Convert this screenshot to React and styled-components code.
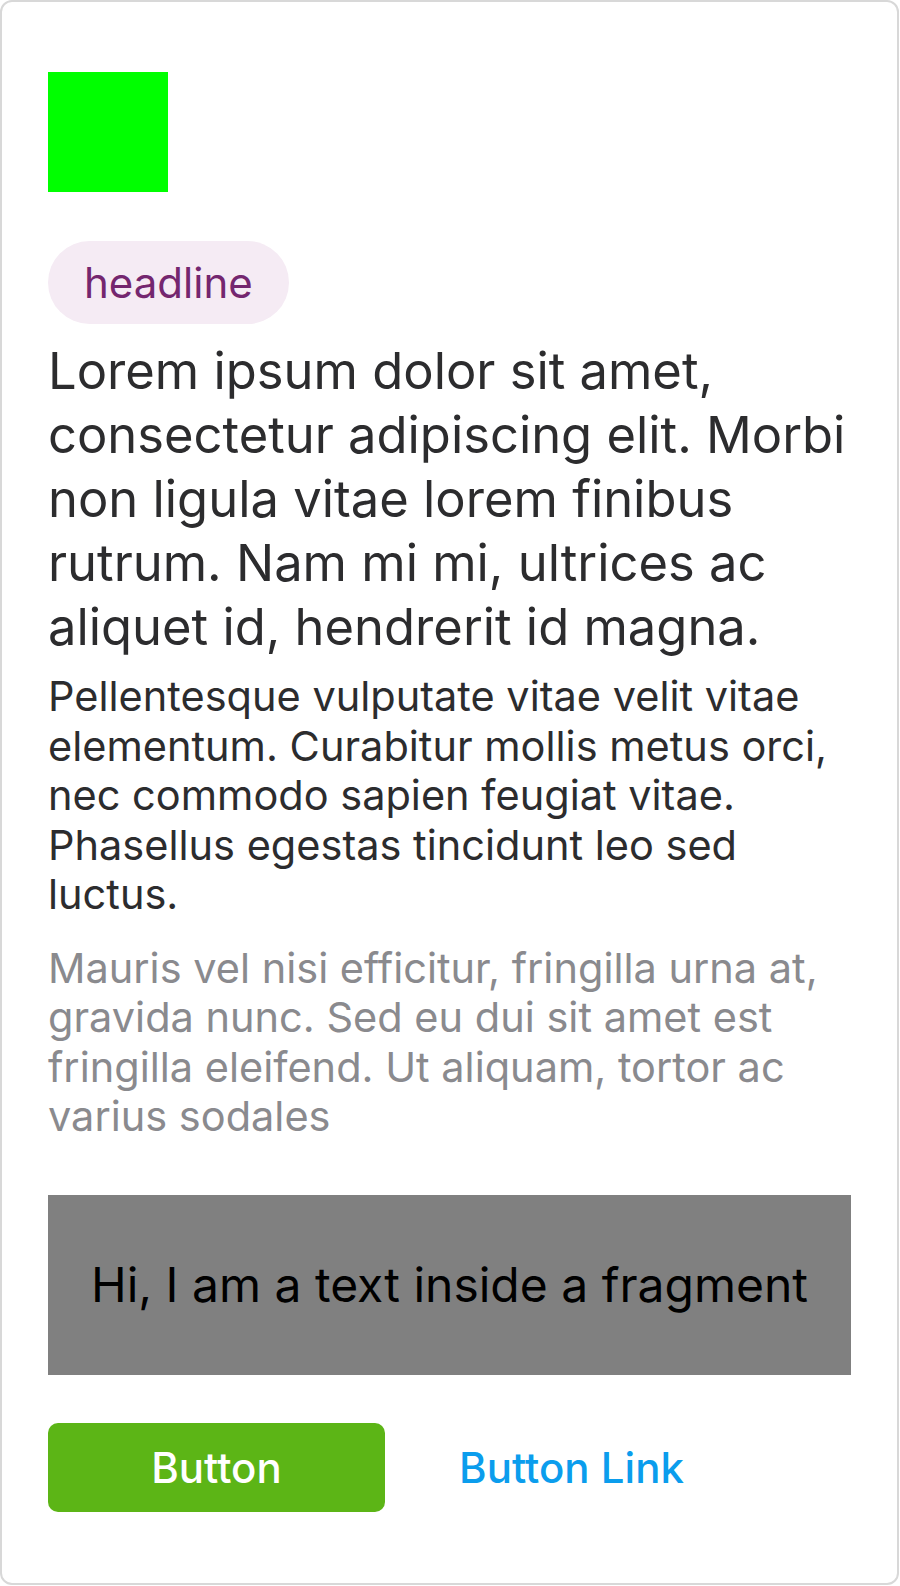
import React from "react";
import styled, { createGlobalStyle } from "styled-components";

const GlobalStyle = createGlobalStyle`
  html, body {
    margin: 0;
    padding: 0;
    background: #ffffff;
  }
  body {
    font-family: Inter, "Noto Sans", "Liberation Sans", sans-serif;
    -webkit-font-smoothing: antialiased;
  }
  * { box-sizing: border-box; }
`;

const Card = styled.div`
  width: 899px;
  min-height: 1585px;
  border: 2px solid #d8d8d8;
  border-radius: 12px;
  background: #ffffff;
  padding: 70px 46px 60px;
  display: flex;
  flex-direction: column;
  align-items: flex-start;
`;

const Square = styled.div`
  width: 120px;
  height: 120px;
  background: #00ff00;
`;

const Pill = styled.span`
  margin-top: 49px;
  display: inline-flex;
  align-items: center;
  height: 83px;
  padding: 0 36px;
  border-radius: 42px;
  background: #f5ebf4;
  color: #74266f;
  font-size: 42px;
  line-height: 1;
`;

const Text = styled.p`
  margin: ${(p) => p.$mt}px 0 0;
  font-size: ${(p) => p.$size}px;
  line-height: ${(p) => p.$lh}px;
  color: ${(p) => p.$color};
  width: 100%;
`;

const Fragment = styled.div`
  margin-top: 53px;
  width: 100%;
  height: 180px;
  background: #808080;
  display: flex;
  align-items: center;
  justify-content: center;
  color: #000000;
  font-size: 48px;
`;

const ButtonRow = styled.div`
  margin-top: 48px;
  display: flex;
  gap: 18px;
  width: 100%;
`;

const Button = styled.button`
  width: 337px;
  height: 89px;
  border: none;
  border-radius: 10px;
  font-family: inherit;
  font-size: 42px;
  font-weight: 500;
  cursor: pointer;
  background: ${(p) => (p.$link ? "transparent" : "#5cb516")};
  color: ${(p) => (p.$link ? "#0b9ded" : "#ffffff")};
`;

export default function App() {
  return (
    <>
      <GlobalStyle />
      <Card>
        <Square />
        <Pill>headline</Pill>
        <Text $mt={15} $size={50.7} $lh={64} $color="#2c2c2e">
          Lorem ipsum dolor sit amet, consectetur adipiscing elit. Morbi non
          ligula vitae lorem finibus rutrum. Nam mi mi, ultrices ac aliquet id,
          hendrerit id magna.
        </Text>
        <Text $mt={13} $size={41.5} $lh={49.6} $color="#2c2c2e">
          Pellentesque vulputate vitae velit vitae elementum. Curabitur mollis
          metus orci, nec commodo sapien feugiat vitae. Phasellus egestas
          tincidunt leo sed luctus.
        </Text>
        <Text $mt={24} $size={41.5} $lh={49.4} $color="#8a8a8e">
          Mauris vel nisi efficitur, fringilla urna at, gravida nunc. Sed eu dui
          sit amet est fringilla eleifend. Ut aliquam, tortor ac varius sodales
        </Text>
        <Fragment>Hi, I am a text inside a fragment</Fragment>
        <ButtonRow>
          <Button>Button</Button>
          <Button $link>Button Link</Button>
        </ButtonRow>
      </Card>
    </>
  );
}
